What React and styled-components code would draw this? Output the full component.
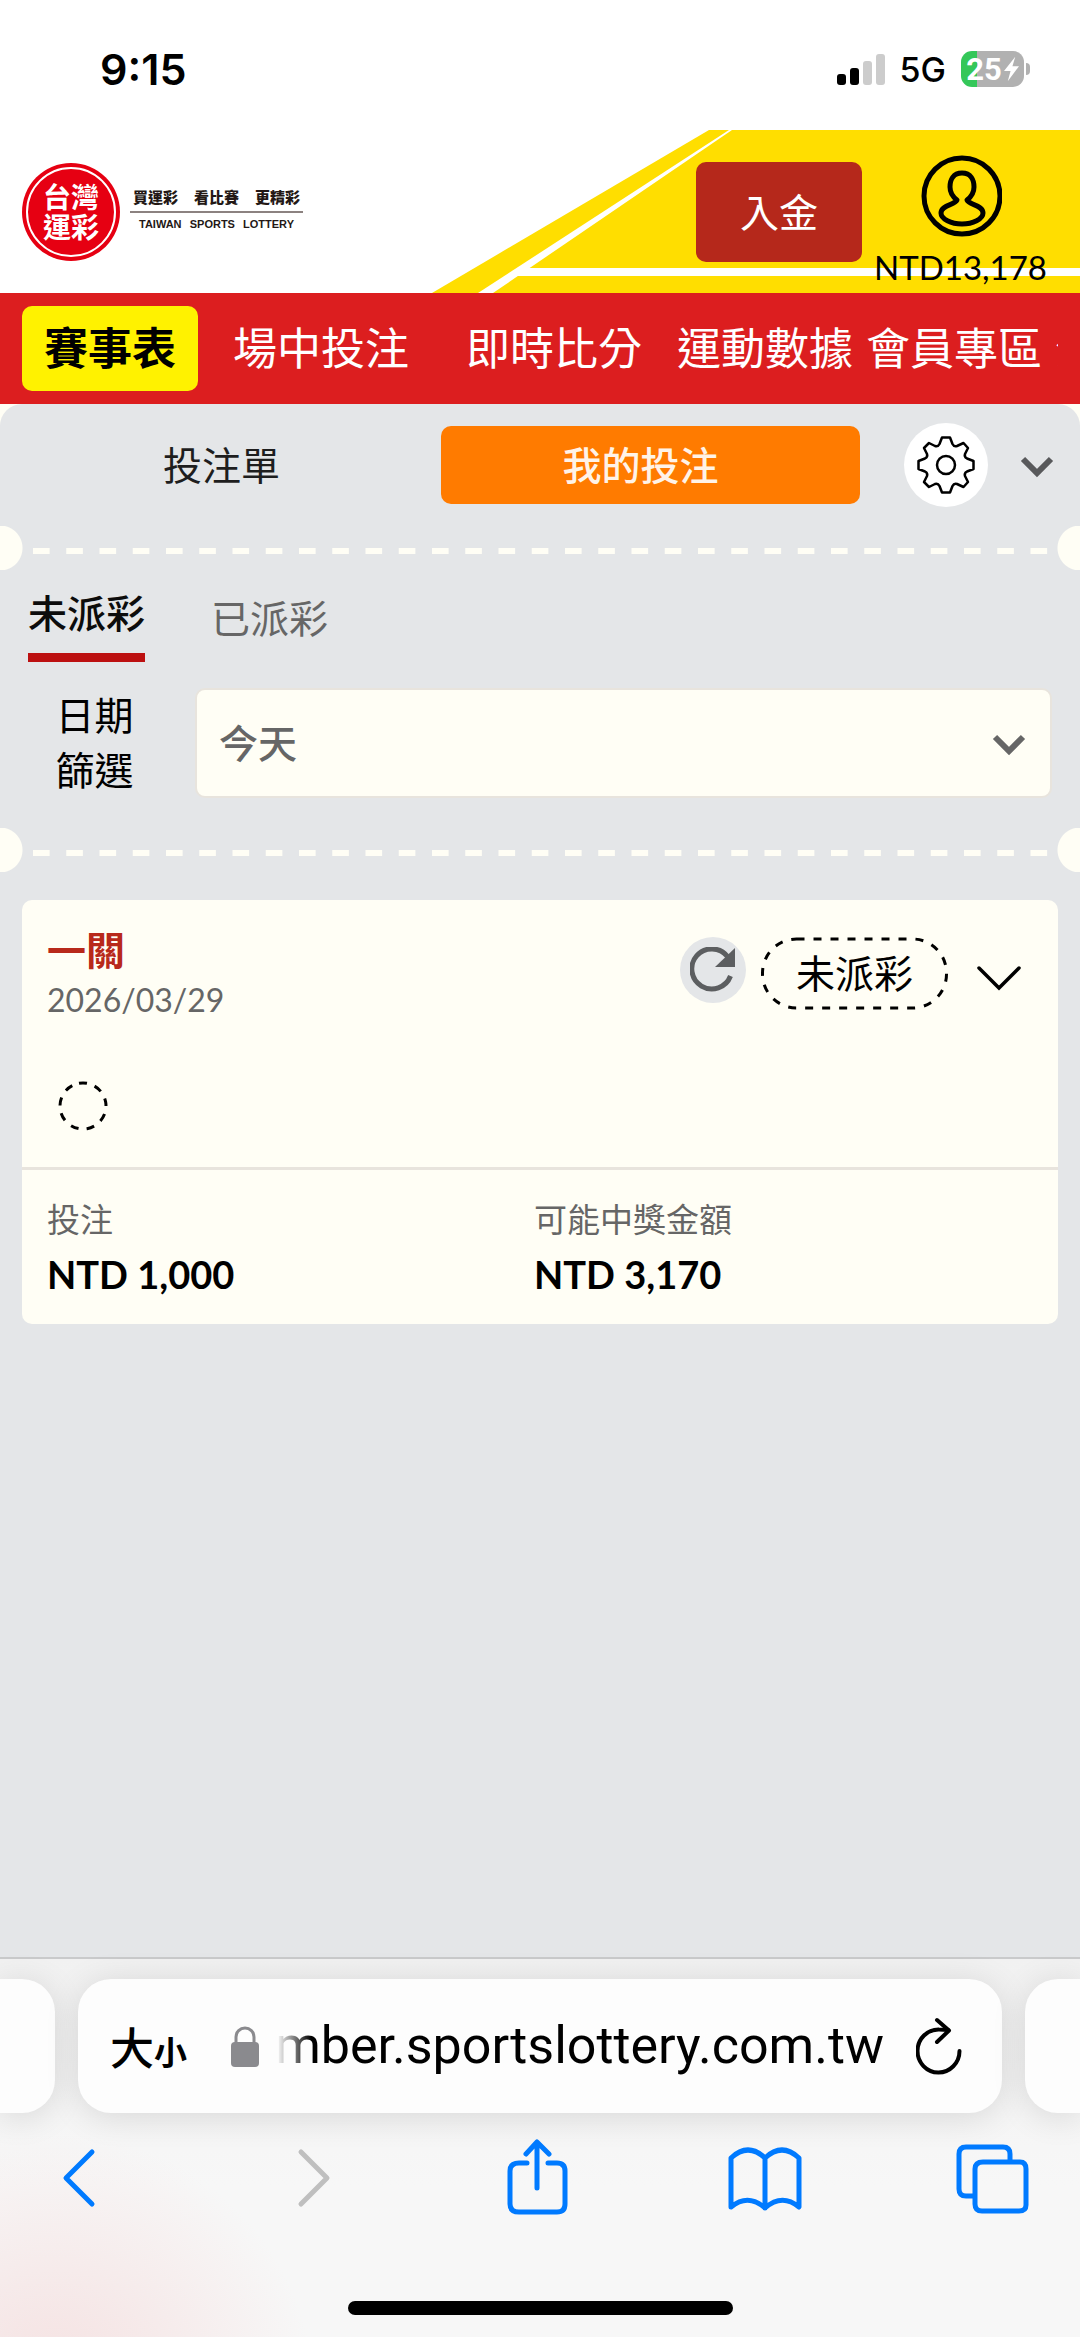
import { useState } from "react";
import styled, { createGlobalStyle } from "styled-components";

//#region Data
const navItems = [
  { label: "賽事表", active: true, boxed: true },
  { label: "場中投注", boxed: true },
  { label: "即時比分", boxed: true },
  { label: "運動數據" },
  { label: "會員專區" },
  { label: "分析" },
];

const bets = [
  {
    id: 1,
    title: "一關",
    date: "2026/03/29",
    status: "未派彩",
    stake: "NTD 1,000",
    payout: "NTD 3,170",
  },
];

//#region Iconos
const ChevronBold = () => (
  <svg width="34" height="22" viewBox="0 0 34 22" fill="none" stroke="currentColor" strokeWidth="6">
    <path d="M3 3 L17 17 L31 3" />
  </svg>
);

const ChevronThin = () => (
  <svg width="44" height="26" viewBox="0 0 44 26" fill="none" stroke="#000" strokeWidth="3.500" strokeLinecap="round">
    <path d="M2 3 L22 23 L42 3" />
  </svg>
);

const SignalIcon = () => (
  <svg width="48" height="32" viewBox="0 0 48 32">
    <rect x="0" y="21" width="9" height="11" rx="3" fill="#000" />
    <rect x="13" y="15" width="9" height="17" rx="3" fill="#000" />
    <rect x="26" y="8" width="9" height="24" rx="3" fill="#ccc" />
    <rect x="39" y="1" width="9" height="31" rx="3" fill="#ccc" />
  </svg>
);

const UserIcon = () => (
  <svg width="82" height="82" viewBox="0 0 82 82" fill="none" stroke="#000" strokeWidth="5">
    <circle cx="42" cy="41" r="38" />
    <path
      strokeLinejoin="round"
      d="M42 18 C33 18 30 25 30 32 C30 38 33 42 37 45 C35 50 21 50 21 58 C21 64 31 69 42 69 C53 69 63 64 63 58 C63 50 49 50 47 45 C51 42 54 38 54 32 C54 25 51 18 42 18 Z"
    />
  </svg>
);

const GearIcon = () => (
  <svg width="58" height="58" viewBox="0 0 58 58" fill="none" stroke="#000" strokeWidth="2.500" strokeLinejoin="round">
    <circle cx="29" cy="29" r="9" />
    <path d="M25 1.500 H33 L35.500 8 Q37 11 40 10 L46.500 7 L51 12 L48 18 Q47 21 50 22.500 L56.500 25 V33 L50 35.500 Q47 37 48 40 L51 46 L46.500 51 L40 48 Q37 47 35.500 50 L33 56.500 H25 L22.500 50 Q21 47 18 48 L12 51 L7 46 L10 40 Q11 37 8 35.500 L1.500 33 V25 L8 22.500 Q11 21 10 18 L7 12 L12 7 L18 10 Q21 11 22.500 8 Z" />
  </svg>
);

const RefreshIcon = () => (
  <svg width="46" height="46" viewBox="0 0 46 46" fill="none">
    <path d="M40.500 29 A20 20 0 1 1 37.500 9.500" stroke="#5c5e60" strokeWidth="5" />
    <path d="M45 1 V20 H25 Z" fill="#5c5e60" />
  </svg>
);

const LockIcon = () => (
  <svg width="28" height="41" viewBox="0 0 28 41">
    <path d="M5 18 V11 A9 9 0 0 1 23 11 V18" fill="none" stroke="#8a8a8e" strokeWidth="3" />
    <rect x="0" y="16" width="28" height="25" rx="4" fill="#8a8a8e" />
  </svg>
);

const ReloadIcon = () => (
  <svg width="46" height="58" viewBox="0 0 46 58" fill="none" stroke="#000" strokeWidth="4" strokeLinecap="round" strokeLinejoin="round">
    <path d="M43.500 34 A21 21.500 0 1 1 23 12.500 Q28 12.500 32 13" />
    <path d="M21 3 L33 13.500 L21 25" />
  </svg>
);

const toolIcons = [
  { name: "上一頁", d: "M54 13 L28 39 L54 65" },
  { name: "下一頁", d: "M34 13 L60 39 L34 65", disabled: true },
  {
    name: "分享",
    d: "M32 24 H24 Q15 24 15 32 V65 Q15 73 24 73 H62 Q70 73 70 65 V32 Q70 24 62 24 H53 M42 49 V4 M31 15 L42 3 L54 15",
  },
  {
    name: "書籤",
    d: "M41 19 Q24 3 7 19 V68 Q24 54 41 69 Q58 54 75 68 V19 Q58 3 41 19 V69",
  },
  {
    name: "分頁",
    d: "M31 23 H68 Q74 23 74 30 V66 Q74 72 67 72 H30 Q23 72 23 65 V30 Q23 23 31 23 Z M23 57 H14 Q7 57 7 50 V15 Q7 8 14 8 H51 Q58 8 58 15 V23",
  },
];

export default function App() {
  const [tab, setTab] = useState("mine");
  const [settled, setSettled] = useState(false);

  return (
    <Page>
      <GlobalStyle />

      <StatusBar>
        <Clock>9:15</Clock>
        <StatusIcons>
          <SignalIcon />
          <Network>5G</Network>
          <BatteryWrap>
            <Battery>
              25
              <svg width="15" height="26" viewBox="0 0 16 26" fill="#fff">
                <path d="M12 0 L0 15 H7 L4 26 L16 10 H9 Z" />
              </svg>
            </Battery>
            <BatteryCap />
          </BatteryWrap>
        </StatusIcons>
      </StatusBar>

      <Header>
        <HeaderArt viewBox="0 0 1080 163" preserveAspectRatio="xMaxYMid slice" aria-hidden="true">
          <path d="M709 0 H1080 V163 H432 Z" fill="#ffde00" />
          <path d="M478 163 L729 0 H732 L493 163 Z" fill="#fff" />
          <path d="M526 138 H1080 V146 H512 Z" fill="#fff" />
        </HeaderArt>
        <Brand href="#">
          <Emblem>
            <EmblemRing>
              <span>台灣</span>
              <span>運彩</span>
            </EmblemRing>
          </Emblem>
          <Slogan>
            <SloganTop>
              <span>買運彩</span>
              <span>看比賽</span>
              <span>更精彩</span>
            </SloganTop>
            <SloganBottom>
              <span>TAIWAN</span>
              <span>SPORTS</span>
              <span>LOTTERY</span>
            </SloganBottom>
          </Slogan>
        </Brand>
        <Account>
          <DepositButton>入金</DepositButton>
          <UserButton>
            <UserIcon />
            NTD13,178
          </UserButton>
        </Account>
      </Header>

      <Nav>
        <NavList>
          {navItems.map(({ label, active, boxed }) => (
            <NavItem key={label} href="#" $active={active} $boxed={boxed}>
              {label}
            </NavItem>
          ))}
        </NavList>
      </Nav>

      <Backdrop>
        <Panel>
          <SlipTabs>
            <SlipTab $active={tab === "slip"} onClick={() => setTab("slip")}>
              投注單
            </SlipTab>
            <SlipTab $active={tab === "mine"} onClick={() => setTab("mine")}>
              我的投注
            </SlipTab>
            <GearButton aria-label="設定">
              <GearIcon />
            </GearButton>
            <CollapseButton aria-label="收合">
              <ChevronBold />
            </CollapseButton>
          </SlipTabs>

          <Perforation>
            <Dashes />
          </Perforation>

          <StateTabs>
            <StateTab $active={!settled} onClick={() => setSettled(false)}>
              未派彩
            </StateTab>
            <StateTab $active={settled} onClick={() => setSettled(true)}>
              已派彩
            </StateTab>
          </StateTabs>

          <Filter>
            <FilterLabel htmlFor="range">
              日期
              <br />
              篩選
            </FilterLabel>
            <SelectBox>
              <Select id="range" defaultValue="today">
                <option value="today">今天</option>
                <option value="yesterday">昨天</option>
              </Select>
              <SelectArrow>
                <ChevronBold />
              </SelectArrow>
            </SelectBox>
          </Filter>

          <Perforation>
            <Dashes />
          </Perforation>

          {bets.map((bet) => (
            <Card key={bet.id}>
              <CardTop>
                <div>
                  <BetTitle>{bet.title}</BetTitle>
                  <BetDate>{bet.date}</BetDate>
                </div>
                <CardActions>
                  <RefreshButton aria-label="重新整理">
                    <RefreshIcon />
                  </RefreshButton>
                  <Pill>
                    <PillOutline viewBox="0 0 188 73" fill="none" stroke="#000" strokeWidth="3" aria-hidden="true">
                      <rect x="2" y="2" width="184" height="69" rx="34" strokeDasharray="8 9" />
                    </PillOutline>
                    {bet.status}
                  </Pill>
                  <ExpandButton aria-label="展開">
                    <ChevronThin />
                  </ExpandButton>
                </CardActions>
              </CardTop>
              <Legs>
                <svg width="52" height="52" viewBox="0 0 52 52" fill="none" stroke="#000" strokeWidth="3">
                  <circle cx="26" cy="26" r="23" strokeDasharray="8 8.050" transform="rotate(-100 26 26)" />
                </svg>
              </Legs>
              <Totals>
                <Total>
                  <dt>投注</dt>
                  <dd>{bet.stake}</dd>
                </Total>
                <Total>
                  <dt>可能中獎金額</dt>
                  <dd>{bet.payout}</dd>
                </Total>
              </Totals>
            </Card>
          ))}
        </Panel>
      </Backdrop>

      <Browser>
        <AddressRow>
          <SideTab $side="left" />
          <AddressBar>
            <TextSize aria-label="大小">
              大<small>小</small>
            </TextSize>
            <LockIcon />
            <Url>
              <span>member.sportslottery.com.tw</span>
            </Url>
            <PlainButton aria-label="重新載入">
              <ReloadIcon />
            </PlainButton>
          </AddressBar>
          <SideTab $side="right" />
        </AddressRow>
        <Tools>
          {toolIcons.map(({ name, d, disabled }) => (
            <ToolButton key={name} aria-label={name} disabled={disabled}>
              <svg width="82" height="78" viewBox="0 0 82 78" fill="none" stroke="currentColor" strokeWidth="5" strokeLinecap="round" strokeLinejoin="round">
                <path d={d} />
              </svg>
            </ToolButton>
          ))}
        </Tools>
        <HomeIndicator />
      </Browser>
    </Page>
  );
}

//#region STYLED COMPONENTS
const GlobalStyle = createGlobalStyle`
  * {
    box-sizing: border-box;
  }
  body {
    margin: 0;
    font-family: Lato, "Noto Sans CJK TC", sans-serif;
    color: #000;
  }
  button {
    font: inherit;
    color: inherit;
    background: none;
    border: none;
    padding: 0;
    cursor: pointer;
  }
  svg {
    display: block;
    flex-shrink: 0;
  }
`;
const Page = styled.div`
  display: flex;
  flex-direction: column;
  min-height: 100vh;
  overflow: hidden;
  background: #fff;
`;
const PlainButton = styled.button`
  display: flex;
  flex-shrink: 0;
`;

const StatusBar = styled.div`
  display: flex;
  justify-content: space-between;
  align-items: center;
  height: 130px;
  padding: 8px 50px 0 100px;
  font-family: Inter, sans-serif;
`;
const Clock = styled.div`
  font-size: 43px;
  font-weight: 600;
`;
const StatusIcons = styled.div`
  display: flex;
  align-items: center;
`;
const Network = styled.span`
  margin: 0 15px;
  font-size: 34px;
  font-weight: 500;
`;
const BatteryWrap = styled.div`
  display: flex;
  align-items: center;
  gap: 2px;
`;
const Battery = styled.div`
  display: flex;
  align-items: center;
  justify-content: center;
  gap: 2px;
  width: 63px;
  height: 36px;
  border-radius: 11px;
  background: linear-gradient(90deg, #34c759 25%, #b1b1b1 25%);
  color: #fff;
  font-family: Roboto, sans-serif;
  font-size: 31px;
  font-weight: 700;
`;
const BatteryCap = styled.div`
  width: 4px;
  height: 12px;
  border-radius: 0 4px 4px 0;
  background: #b1b1b1;
`;

const Header = styled.header`
  position: relative;
  display: flex;
  justify-content: space-between;
  height: 163px;
  padding: 0 33px 0 22px;
`;
const HeaderArt = styled.svg`
  position: absolute;
  inset: 0;
  width: 100%;
  height: 100%;
`;
const Brand = styled.a`
  position: relative;
  display: flex;
  align-items: center;
  gap: 10px;
  color: #231815;
  text-decoration: none;
`;
const Emblem = styled.div`
  padding: 4px;
  border-radius: 50%;
  background: #e60012;
`;
const EmblemRing = styled.div`
  display: grid;
  place-content: center;
  width: 90px;
  height: 90px;
  border: 2px solid #fff;
  border-radius: 50%;
  color: #fff;
  font-size: 28px;
  font-weight: 700;
  line-height: 30px;
`;
const Slogan = styled.div`
  width: 173px;
  padding-bottom: 4px;
`;
const SloganTop = styled.div`
  display: flex;
  justify-content: space-between;
  padding: 0 3px 4px;
  border-bottom: 2px solid #8c8280;
  font-size: 15px;
  font-weight: 900;
  line-height: 20px;
`;
const SloganBottom = styled.div`
  display: flex;
  justify-content: space-between;
  padding: 3px 9px 0;
  font-family: "Liberation Sans", Arial, sans-serif;
  font-size: 11px;
  font-weight: 700;
  line-height: 16px;
`;
const Account = styled.div`
  position: relative;
  display: flex;
  gap: 12px;
`;
const DepositButton = styled.button`
  width: 166px;
  height: 100px;
  margin-top: 32px;
  padding-bottom: 5px;
  border-radius: 10px;
  background: #b5281b;
  color: #fff;
  font-size: 39px;
`;
const UserButton = styled.button`
  display: flex;
  flex-direction: column;
  align-items: center;
  justify-content: flex-end;
  gap: 12px;
  padding-bottom: 8px;
  font-size: 33px;
  line-height: 36px;
`;

const Nav = styled.nav`
  padding: 13px 22px;
  background: #dc1e1f;
`;
const NavList = styled.div`
  display: flex;
  gap: 13px;
  overflow: hidden;
`;
const NavItem = styled.a`
  flex-shrink: 0;
  padding: ${({ $boxed }) => ($boxed ? "0 22px" : "0")};
  border-radius: 10px;
  background: ${({ $active }) => ($active ? "#fff200" : "transparent")};
  color: ${({ $active }) => ($active ? "#000" : "#fff")};
  font-size: 44px;
  font-weight: ${({ $active }) => ($active ? 700 : 400)};
  line-height: 85px;
  text-decoration: none;
`;

const Backdrop = styled.main`
  display: flex;
  flex: 1;
  background: #fffef5;
`;
const Panel = styled.section`
  flex: 1;
  min-width: 0;
  border-radius: 22px 22px 0 0;
  background: #e4e6e8;
`;
const SlipTabs = styled.div`
  display: flex;
  align-items: center;
  height: 122px;
  padding: 0 26px 0 22px;
`;
const SlipTab = styled.button`
  flex: 1;
  height: 78px;
  padding: 0 20px 5px 0;
  border-radius: 10px;
  background: ${({ $active }) => ($active ? "#ff7b00" : "transparent")};
  color: ${({ $active }) => ($active ? "#fff3e8" : "#1e1e1e")};
  font-size: 39px;
  font-weight: ${({ $active }) => ($active ? 500 : 400)};
`;
const GearButton = styled.button`
  display: grid;
  place-items: center;
  width: 84px;
  height: 84px;
  margin: 0 32px 0 44px;
  border-radius: 50%;
  background: #fff;
`;
const CollapseButton = styled(PlainButton)`
  padding-top: 4px;
  color: #58595b;
`;

const Perforation = styled.div`
  display: flex;
  align-items: center;
  height: 44px;
  background:
    radial-gradient(circle at left, #fffef5 22px, transparent 23px),
    radial-gradient(circle at right, #fffef5 22px, transparent 23px);
`;
const Dashes = styled.div`
  flex: 1;
  height: 6px;
  margin: 6px 16px 0 33px;
  background: linear-gradient(90deg, #fffef5 50%, transparent 50%) 0 0 / 33px 6px round;
`;

const StateTabs = styled.div`
  display: flex;
  align-items: flex-start;
  gap: 66px;
  padding: 14px 28px 0;
`;
const StateTab = styled.button`
  height: ${({ $active }) => ($active ? "78px" : "88px")};
  padding-bottom: 12px;
  border-bottom: 9px solid ${({ $active }) => ($active ? "#bc1010" : "transparent")};
  color: ${({ $active }) => ($active ? "#0c0c0c" : "#666")};
  font-size: 39px;
  font-weight: ${({ $active }) => ($active ? 500 : 400)};
  line-height: 56px;
`;

const Filter = styled.div`
  display: flex;
  align-items: center;
  padding: 16px 28px 30px 22px;
`;
const FilterLabel = styled.label`
  width: 173px;
  padding-right: 28px;
  font-size: 39px;
  line-height: 55px;
  text-align: center;
`;
const SelectBox = styled.div`
  position: relative;
  flex: 1;
`;
const Select = styled.select`
  display: block;
  appearance: none;
  width: 100%;
  height: 110px;
  padding: 0 22px;
  border: 2px solid #e8e4dd;
  border-radius: 10px;
  background: #fffef5;
  color: #666;
  font: 500 39px Lato, "Noto Sans CJK TC", sans-serif;
`;
const SelectArrow = styled.span`
  position: absolute;
  right: 26px;
  top: 46px;
  color: #666;
  pointer-events: none;
`;

const Card = styled.article`
  margin: 28px 22px;
  border-radius: 10px;
  background: #fffef5;
`;
const CardTop = styled.div`
  display: flex;
  justify-content: space-between;
  align-items: flex-start;
  padding: 28px 37px 0 25px;
`;
const BetTitle = styled.h2`
  margin: 0;
  color: #b8291b;
  font-size: 39px;
  font-weight: 700;
  line-height: 44px;
`;
const BetDate = styled.div`
  margin-top: 6px;
  color: #666;
  font-size: 32px;
  line-height: 44px;
`;
const CardActions = styled.div`
  display: flex;
  align-items: flex-start;
  padding-top: 9px;
`;
const RefreshButton = styled.button`
  display: grid;
  place-items: center;
  width: 66px;
  height: 66px;
  border-radius: 50%;
  background: #e4e6e8;
`;
const Pill = styled.span`
  position: relative;
  margin: 0 28px 0 14px;
  padding: 0 36px;
  font-size: 39px;
  line-height: 73px;
`;
const PillOutline = styled.svg`
  position: absolute;
  inset: 0;
  width: 100%;
  height: 100%;
`;
const ExpandButton = styled(PlainButton)`
  padding-top: 28px;
`;
const Legs = styled.div`
  padding: 58px 35px 35px;
`;
const Totals = styled.dl`
  display: grid;
  grid-template-columns: 1fr 1fr;
  margin: 0;
  padding: 24px 37px 20px 25px;
  border-top: 3px solid #e8e4dd;
`;
const Total = styled.div`
  dt {
    color: #666;
    font-size: 33px;
    line-height: 50px;
  }
  dd {
    margin: 0;
    font-size: 38px;
    font-weight: 700;
    line-height: 60px;
  }
`;

const Browser = styled.footer`
  border-top: 2px solid #c9cacb;
  background:
    radial-gradient(circle at 5% 115%, #f5e0e0, transparent 260px),
    linear-gradient(#f1f1f1, #f7f7f7 60%);
`;
const AddressRow = styled.div`
  display: flex;
  gap: 23px;
  padding-top: 20px;
`;
const SideTab = styled.div`
  width: 55px;
  border-radius: ${({ $side }) => ($side === "left" ? "0 33px 33px 0" : "33px 0 0 33px")};
  background: #fdfdfd;
  box-shadow: 0 4px 34px rgba(0, 0, 0, 0.12);
`;
const AddressBar = styled.div`
  display: flex;
  align-items: center;
  flex: 1;
  min-width: 0;
  height: 134px;
  padding: 0 40px 0 32px;
  border-radius: 33px;
  background: #fdfdfd;
  box-shadow: 0 4px 34px rgba(0, 0, 0, 0.12);
`;
const TextSize = styled.button`
  margin-right: 44px;
  font-size: 44px;
  font-weight: 500;

  small {
    font-size: 33px;
    font-weight: 700;
  }
`;
const Url = styled.button`
  display: flex;
  justify-content: flex-end;
  flex: 1;
  min-width: 0;
  margin: 0 32px 0 18px;
  overflow: hidden;
  font-family: Roboto, sans-serif;
  font-size: 52px;
  line-height: 64px;
  mask-image: linear-gradient(90deg, transparent, #000 34px);
`;
const Tools = styled.div`
  display: flex;
  justify-content: space-between;
  padding: 26px 46px 0 38px;
`;
const ToolButton = styled(PlainButton)`
  color: #007aff;

  &:disabled {
    color: #bfbfbf;
  }
`;
const HomeIndicator = styled.div`
  width: 385px;
  height: 14px;
  margin: 84px auto 22px;
  border-radius: 7px;
  background: #000;
`;
